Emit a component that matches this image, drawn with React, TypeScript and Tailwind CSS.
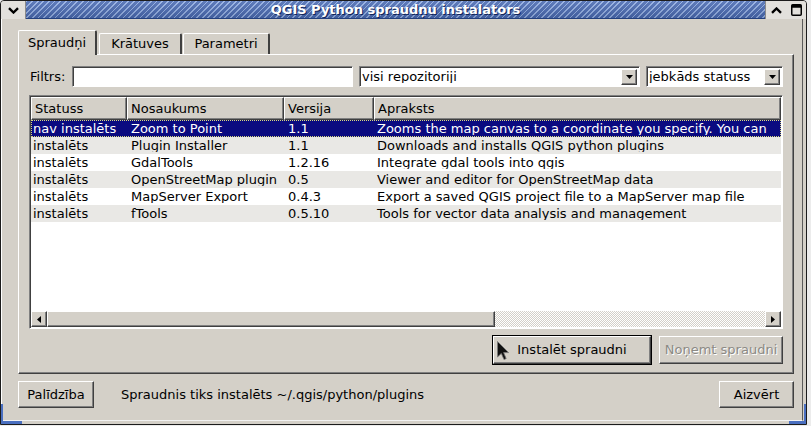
import React from "react";

const rows: string[][] = [
  ["nav instalēts", "Zoom to Point", "1.1", "Zooms the map canvas to a coordinate you specify. You can"],
  ["instalēts", "Plugin Installer", "1.1", "Downloads and installs QGIS python plugins"],
  ["instalēts", "GdalTools", "1.2.16", "Integrate gdal tools into qgis"],
  ["instalēts", "OpenStreetMap plugin", "0.5", "Viewer and editor for OpenStreetMap data"],
  ["instalēts", "MapServer Export", "0.4.3", "Export a saved QGIS project file to a MapServer map file"],
  ["instalēts", "fTools", "0.5.10", "Tools for vector data analysis and management"],
];

const raised =
  "border border-t-white border-l-white border-r-[#404040] border-b-[#404040] shadow-[inset_-1px_-1px_0_#808080] bg-[#d4d0c8]";
const sunken =
  "border border-t-[#808080] border-l-[#808080] border-r-white border-b-white shadow-[inset_1px_1px_0_#404040]";

function Arrow({ dir }: { dir: "down" | "left" | "right" }) {
  if (dir === "down")
    return (
      <svg width="7" height="4" viewBox="0 0 7 4">
        <path d="M0 0H7L3.5 4Z" fill="#000" />
      </svg>
    );
  if (dir === "left")
    return (
      <svg width="4" height="7" viewBox="0 0 4 7">
        <path d="M4 0V7L0 3.5Z" fill="#000" />
      </svg>
    );
  return (
    <svg width="4" height="7" viewBox="0 0 4 7">
      <path d="M0 0V7L4 3.5Z" fill="#000" />
    </svg>
  );
}

function Combo({ text, w }: { text: string; w: string }) {
  return (
    <div className={`${w} h-[21px] bg-white ${sunken} flex items-center pl-[2px] pr-[2px]`}>
      <span className="flex-1 truncate leading-none">{text}</span>
      <div className={`w-[16px] h-[16px] ${raised} flex items-center justify-center`}>
        <Arrow dir="down" />
      </div>
    </div>
  );
}

export default function App() {
  return (
    <div className="relative w-[811px] h-[426px] bg-[#ececec] [font-family:'DejaVu_Sans',sans-serif] text-[13px] text-black">
      <div className="relative w-[807px] h-[425px] bg-[#d4d0c8] border border-[#1c1c1c] rounded-t-[4px] flex flex-col overflow-hidden">
        {/* Title bar */}
        <div className="flex h-[18px] shrink-0">
          <div className="w-[25px] bg-[#e2e0dc] flex items-center justify-center border-r border-[#8a8a8a]">
            <svg width="11" height="7" viewBox="0 0 11 7">
              <path d="M1 1.2L5.5 5.5L10 1.2" stroke="#000" strokeWidth="2.4" fill="none" />
            </svg>
          </div>
          <div className="flex-1 flex items-center justify-center border-b border-[#23407e] [background-image:linear-gradient(to_bottom,rgba(255,255,255,0.12),rgba(0,0,0,0.12)),repeating-linear-gradient(135deg,#92aee3_0px,#92aee3_1.2px,#4a6bb3_1.2px,#4a6bb3_4px)]">
            <span className="text-white font-bold text-[13px] leading-none [text-shadow:1px_1px_0_#10245a]">
              QGIS Python spraudņu instalators
            </span>
          </div>
          <div className="w-[21px] bg-[#e2e0dc] flex items-center justify-center border-l border-[#8a8a8a]">
            <svg width="11" height="7" viewBox="0 0 11 7">
              <path d="M1 5.8L5.5 1.5L10 5.8" stroke="#000" strokeWidth="2.4" fill="none" />
            </svg>
          </div>
          <div className="w-[20px] bg-[#e2e0dc] flex items-center justify-center">
            <svg width="11" height="12" viewBox="0 0 11 12">
              <rect x="0.75" y="0.75" width="9.5" height="10.5" rx="1" stroke="#000" strokeWidth="1.5" fill="none" />
              <rect x="0.75" y="0.75" width="9.5" height="3" fill="#000" />
            </svg>
          </div>
        </div>

        {/* Body */}
        <div className="flex-1 flex flex-col pl-[16px] pr-[8px] mr-[3px] mb-[3px] border-l border-white border-r border-r-[#5a5a5a] border-b border-b-[#f2f2f2]">
          {/* Tabs */}
          <div className="mt-[11px] flex items-end h-[24px] relative z-10">
            <div className="w-[79px] h-[25px] -mb-[1px] bg-[#d4d0c8] border-l border-t border-white border-r-2 border-r-[#404040] rounded-t-[2px] flex items-center justify-center">
              Spraudņi
            </div>
            <div className="ml-[2px] w-[83px] h-[21px] border-l border-t border-white border-r-2 border-r-[#404040] rounded-t-[2px] flex items-center justify-center">
              Krātuves
            </div>
            <div className="ml-[1px] w-[87px] h-[21px] border-l border-t border-white border-r-2 border-r-[#404040] rounded-t-[2px] flex items-center justify-center">
              Parametri
            </div>
          </div>

          {/* Tab panel */}
          <div className="w-[776px] h-[320px] border border-t-white border-l-white border-r-[#404040] border-b-[#404040] shadow-[inset_-1px_-1px_0_#808080] pl-[10px] pt-[11px] flex flex-col">
            <div className="flex items-center h-[21px]">
              <span className="w-[43px] pl-[1px]">Filtrs:</span>
              <div className={`w-[281px] h-[21px] bg-white ${sunken}`} />
              <div className="ml-[6px]">
                <Combo text="visi repozitoriji" w="w-[281px]" />
              </div>
              <div className="ml-[6px]">
                <Combo text="jebkāds statuss" w="w-[137px]" />
              </div>
            </div>

            {/* Table */}
            <div className={`mt-[8px] w-[754px] h-[234px] bg-white ${sunken} p-[1px] flex flex-col`}>
              <div className="flex h-[23px] shrink-0">
                {[
                  ["Statuss", "w-[96px]"],
                  ["Nosaukums", "w-[157px]"],
                  ["Versija", "w-[90px]"],
                  ["Apraksts", "flex-1"],
                ].map(([t, w]) => (
                  <div key={t} className={`${w} ${raised} flex items-center pl-[3px]`}>
                    {t}
                  </div>
                ))}
              </div>
              <div className="flex-1 flex flex-col overflow-hidden">
                {rows.map((r, i) => {
                  const sel = i === 0;
                  const bg = sel
                    ? "bg-[#0a0a80] text-white outline-1 outline-dotted -outline-offset-1 outline-[#d8d880]"
                    : i % 2 === 1
                    ? "bg-[#e9e8e5]"
                    : "bg-white";
                  return (
                    <div key={i} className={`flex h-[17px] items-center whitespace-nowrap leading-none ${bg}`}>
                      <div className="w-[96px] pl-[2px] overflow-hidden">{r[0]}</div>
                      <div className="w-[157px] pl-[4px] overflow-hidden">{r[1]}</div>
                      <div className="w-[90px] pl-[4px] overflow-hidden">{r[2]}</div>
                      <div className="flex-1 pl-[3px] overflow-hidden">{r[3]}</div>
                    </div>
                  );
                })}
              </div>
              {/* Scrollbar */}
              <div className="flex h-[16px] shrink-0 bg-[#d4d0c8]">
                <div className={`w-[16px] ${raised} flex items-center justify-center`}>
                  <Arrow dir="left" />
                </div>
                <div className={`w-[448px] ${raised}`} />
                <div className="flex-1 [background-image:repeating-conic-gradient(#d4d0c8_0%_25%,#ffffff_0%_50%)] [background-size:2px_2px]" />
                <div className={`w-[16px] ${raised} flex items-center justify-center`}>
                  <Arrow dir="right" />
                </div>
              </div>
            </div>

            {/* Action buttons */}
            <div className="mt-[6px] w-[754px] flex justify-end items-center gap-[7px]">
              <div className="border border-black">
                <div className={`w-[158px] h-[28px] ${raised} flex items-center justify-center`}>
                  Instalēt spraudni
                </div>
              </div>
              <div className={`w-[124px] h-[28px] ${raised} flex items-center justify-center text-[#8c8a85] [text-shadow:1px_1px_0_#ffffff]`}>
                Noņemt spraudni
              </div>
            </div>
          </div>

          {/* Bottom row */}
          <div className="mt-[7px] w-[776px] flex items-center">
            <div className={`w-[76px] h-[27px] ${raised} flex items-center justify-center`}>Palīdzība</div>
            <span className="ml-[27px] flex-1">Spraudnis tiks instalēts ~/.qgis/python/plugins</span>
            <div className={`w-[75px] h-[27px] ${raised} flex items-center justify-center`}>Aizvērt</div>
          </div>
        </div>

        {/* Resize corner highlights */}
        <div className="absolute left-0 bottom-0 w-[21px] h-[20px] border-l-2 border-b-[3px] border-[#4a6fc0]" />
        <div className="absolute right-0 bottom-0 w-[17px] h-[20px] border-r-2 border-b-[3px] border-[#4a6fc0]" />
      </div>

      {/* Mouse cursor */}
      <svg className="absolute left-[497px] top-[341px]" width="13" height="20" viewBox="0 0 13 20">
        <path d="M0.5 0.5V16L4.3 12.4L7 18.6L9.2 17.6L6.6 11.6H11.6Z" fill="#111" stroke="#7a7a7a" strokeWidth="0.8" />
      </svg>
    </div>
  );
}
